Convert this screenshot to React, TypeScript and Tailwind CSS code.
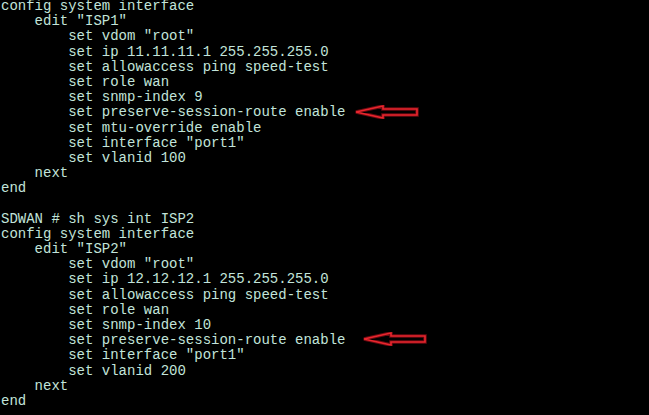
const lines: { text: string; arrow?: 'a' | 'b' }[] = [
  { text: 'config system interface' },
  { text: '    edit "ISP1"' },
  { text: '        set vdom "root"' },
  { text: '        set ip 11.11.11.1 255.255.255.0' },
  { text: '        set allowaccess ping speed-test' },
  { text: '        set role wan' },
  { text: '        set snmp-index 9' },
  { text: '        set preserve-session-route enable', arrow: 'a' },
  { text: '        set mtu-override enable' },
  { text: '        set interface "port1"' },
  { text: '        set vlanid 100' },
  { text: '    next' },
  { text: 'end' },
  { text: '' },
  { text: 'SDWAN # sh sys int ISP2' },
  { text: 'config system interface' },
  { text: '    edit "ISP2"' },
  { text: '        set vdom "root"' },
  { text: '        set ip 12.12.12.1 255.255.255.0' },
  { text: '        set allowaccess ping speed-test' },
  { text: '        set role wan' },
  { text: '        set snmp-index 10' },
  { text: '        set preserve-session-route enable', arrow: 'b' },
  { text: '        set interface "port1"' },
  { text: '        set vlanid 200' },
  { text: '    next' },
  { text: 'end' },
]

function Arrow({ className }: { className: string }) {
  // red outlined arrow pointing left, drawn over the terminal
  const pts = '1,7 28,1 28,4 62,4 62,10 28,10 28,13'
  return (
    <svg className={className} width="64" height="14" viewBox="0 0 64 14">
      <polygon points={pts} fill="none" stroke="#6a0a10" strokeWidth="3.5" strokeLinejoin="miter" />
      <polygon points={pts} fill="none" stroke="#e8262e" strokeWidth="1.6" strokeLinejoin="miter" />
    </svg>
  )
}

export default function App() {
  return (
    <div className="w-[649px] h-[415px] overflow-hidden bg-black">
      <div className="pl-[1px] -mt-[1px] font-['Liberation_Mono',monospace] text-[14px] leading-[15.2px] text-[#c2e4da]">
        {lines.map((l, i) => (
          <div key={i} className="relative h-[15.2px] whitespace-pre">
            {l.text}
            {l.arrow === 'a' && <Arrow className="absolute left-[354px] top-0" />}
            {l.arrow === 'b' && <Arrow className="absolute left-[362px] -top-[1px]" />}
          </div>
        ))}
      </div>
    </div>
  )
}
